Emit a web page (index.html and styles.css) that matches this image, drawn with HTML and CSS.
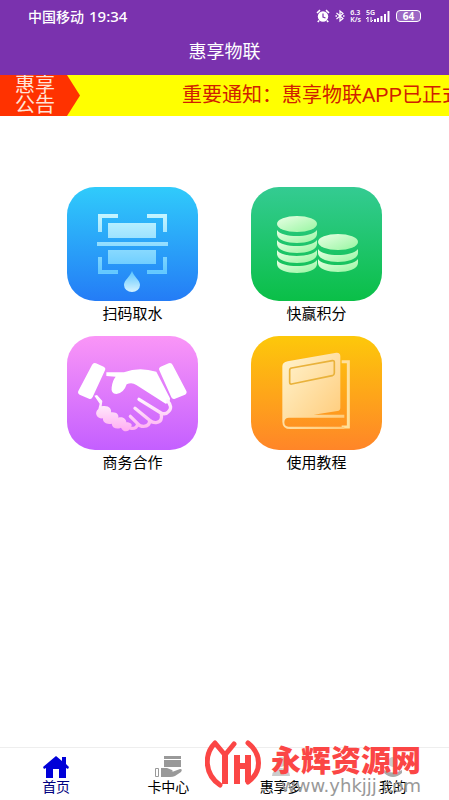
FILE: index.html
```
<!DOCTYPE html>
<html lang="zh-CN">
<head>
    <meta charset="UTF-8">
    <meta name="viewport" content="width=device-width,initial-scale=1.0" />
    <title>惠享物联</title>
    <link rel="stylesheet" href="styles.css">
</head>
<body>
<header class="header">
    <div class="status">
        <div class="status_left"><span>中国移动</span><span class="time">19:34</span></div>
        <div class="status_right">
            <svg width="14" height="14" viewBox="0 0 14 14"><circle cx="7" cy="7.5" r="5.2" fill="#fff"/><path d="M1 4L4 1.2M13 4L10 1.2M3 11.500L1.800 13M11 11.500L12.200 13" stroke="#fff" stroke-width="1.600"/><path d="M7 4.500V8L9.500 9" fill="none" stroke="#7a32ae" stroke-width="1.200"/></svg>
            <svg width="10" height="14" viewBox="0 0 10 14"><path d="M1.500 4L8 9.500L5 12V2L8 4.500L1.500 10" fill="none" stroke="#fff" stroke-width="1.200"/><path d="M.5 7h1.500M8 7h1.500" stroke="#fff" stroke-width="1.500"/></svg>
            <span class="speed">6.3<br>K/s</span>
            <svg class="signal" width="25" height="14" viewBox="0 0 25 14"><text x="0" y="6" font-size="7" fill="#fff">5G</text><path d="M2 13V8M0 10l2-2M5 8v5M5 13l2-2" stroke="#fff" fill="none"/><path d="M9 13V10M12 13V9M15.500 13V7M19 13V5M22.500 13V2" stroke="#fff" stroke-width="2"/></svg>
            <span class="battery">64</span>
        </div>
    </div>
    <h1 class="title">惠享物联</h1>
</header>

<!--notice-->
<section class="notice">
    <div class="notice_tag">惠享<br>公告</div>
    <p class="notice_text">重要通知：惠享物联APP已正式上线</p>
</section>

<!--menu-->
<main class="menu">
    <a class="menu_item" href="#">
        <span class="tile tile_blue">
            <svg viewBox="0 0 131 114">
                <defs><linearGradient id="scan" gradientUnits="userSpaceOnUse" x1="0" y1="27" x2="0" y2="105"><stop offset="0" stop-color="#c5f5ff"/><stop offset=".75" stop-color="#62c8ff"/><stop offset="1" stop-color="#d5f3ff"/></linearGradient></defs>
                <g fill="url(#scan)">
                    <path d="M31 27h20v4H35v14h-4zM80 27h20v18h-4V31H80zM31 70h4v13h16v4H31zM96 70h4v17H80v-4h16z"/>
                    <path d="M41 36h48v15H41zM30 55h71v4H30zM41 63h48v14H41z"/>
                    <path d="M65 84C63 90 57 93 57 98a8 7 0 0 0 16 0C73 93 67 90 65 84z"/>
                </g>
            </svg>
        </span>
        <span class="menu_name">扫码取水</span>
    </a>
    <a class="menu_item" href="#">
        <span class="tile tile_green">
            <svg viewBox="0 0 131 114">
                <defs><linearGradient id="coin" x1="0" y1="0" x2="1" y2="1"><stop offset="0" stop-color="#e9ffe5"/><stop offset="1" stop-color="#96f5a0"/></linearGradient></defs>
                <g fill="url(#coin)">
                    <ellipse cx="46" cy="37" rx="20" ry="8"/>
                    <path d="M26 43c5 8 34 8 40 0v4c0 12-40 12-40 0z"/>
                    <path d="M26 53c5 8 34 8 40 0v4c0 12-40 12-40 0z"/>
                    <path d="M26 63c5 8 34 8 40 0v4c0 12-40 12-40 0z"/>
                    <path d="M26 73c5 8 34 8 40 0v4c0 12-40 12-40 0z"/>
                    <ellipse cx="87" cy="55" rx="20" ry="8"/>
                    <path d="M67 62c5 8 34 8 40 0v4c0 12-40 12-40 0z"/>
                    <path d="M67 72c5 8 34 8 40 0v4c0 12-40 12-40 0z"/>
                </g>
            </svg>
        </span>
        <span class="menu_name">快赢积分</span>
    </a>
    <a class="menu_item" href="#">
        <span class="tile tile_pink">
            <svg viewBox="24 21 393 342">
                <defs><linearGradient id="hand" gradientUnits="userSpaceOnUse" x1="0" y1="200" x2="0" y2="305"><stop offset="0" stop-color="#fff"/><stop offset="1" stop-color="#ffaef2"/></linearGradient></defs>
                <path d="M111 103l23 10q7 4 4 11l-37 80q-4 8-11 5l-28-12q-7-4-4-11l41-78q4-8 12-5zM329 103l-24 10q-7 4-4 11l36 81q4 7 11 4l30-12q7-4 4-11l-41-78q-4-8-12-5z" fill="#fff"/>
                <path d="M142 130H195Q240 112 292 128L333 208Q334 222 320 224L232 168Q218 158 203 166Q195 192 172 195Q155 194 158 175Q160 155 170 143L142 141z" fill="#fff"/>
                <path d="M325 215q18 20 3 33q-8 10-22 4L240 211M306 252q6 25-12 28q-10 3-22-6L228 238M272 274q0 18-18 18q-12 0-18-8L214 262M236 286q-4 14-20 12" fill="none" stroke="url(#hand)" stroke-width="10" stroke-linecap="round" stroke-linejoin="round"/>
                <path d="M106 200l8-2 16 18-2 16c22-4 30 8 28 18c18-2 24 8 22 16c16-4 24 6 24 14c14 0 20 8 14 14c-6 18-24 16-30 2c-12 6-26 2-28-12c-14 4-28-4-26-16c-18 2-28-16-14-28l4-16z" fill="url(#hand)"/>
            </svg>
        </span>
        <span class="menu_name">商务合作</span>
    </a>
    <a class="menu_item" href="#">
        <span class="tile tile_orange">
            <svg viewBox="24 21 393 342">
                <defs><linearGradient id="book" x1="0" y1="0" x2="1" y2="1"><stop offset="0" stop-color="#fff4cf"/><stop offset="1" stop-color="#ffc873"/></linearGradient></defs>
                <path d="M296 98H316V294H296" fill="none" stroke="#ffe09a" stroke-width="9"/>
                <path d="M134 97L280 71q12-1 12 11V236q0 8-9 10L212 257H304V266H138q-14 0-14 14t14 13H304V300H142q-24 0-24-22V112q0-12 16-15z" fill="url(#book)"/>
                <path d="M146 117l122-22q6-1 6 5v32q0 6-6 8l-122 25q-6 1-6-5v-36q0-6 6-7z" fill="none" stroke="#e9b23b" stroke-width="5"/>
            </svg>
        </span>
        <span class="menu_name">使用教程</span>
    </a>
</main>

<!--tab bar-->
<footer class="footer">
    <nav class="tabs">
        <a class="tab on" href="#">
            <svg width="26" height="22" viewBox="0 0 26 22"><path d="M13 0l6 5V1h4v7l3 3-1 2-2-1v10h-7v-9h-6v9H3V12l-2 1-1-2z"/></svg>
            <span>首页</span>
        </a>
        <a class="tab" href="#">
            <svg width="28" height="22" viewBox="0 0 28 22"><path d="M10 0h17v3H10zM10 4h17v7H10zM7 12h6l5 2q2 2-1 2h-4 5l8-3q3 0 1 3l-6 4q-2 1-5 1H7z" fill="#999"/><path d="M1.500 12.500h3v8h-3z" fill="none" stroke="#999"/></svg>
            <span>卡中心</span>
        </a>
        <a class="tab" href="#">
            <svg width="24" height="22" viewBox="0 0 24 22"><circle cx="12" cy="6" r="5" fill="#ccc"/><path d="M3 20q1-8 9-8t9 8z" fill="#ccc"/></svg>
            <span>惠享多</span>
        </a>
        <a class="tab" href="#">
            <svg width="24" height="22" viewBox="0 0 24 22"><circle cx="12" cy="6" r="5" fill="#ccc"/><path d="M3 14q9 5 18 0v3q-9 8-18 0z" fill="#aaa"/></svg>
            <span>我的</span>
        </a>
    </nav>
    <div class="brand">
        <svg width="56" height="48" viewBox="0 0 56 48" fill="none" stroke="#fb4645" stroke-width="5" stroke-linecap="round" stroke-linejoin="round"><path d="M15 45C-1 34-1 14 10 3L20 15 29 4"/><path d="M43 3C57 14 57 32 43 42"/><path d="M20 15V44M32 15V44M32 26H43M43 15V42" stroke-width="6" stroke-linecap="butt"/></svg>
        <div class="brand_text">
            <strong>永辉资源网</strong>
            <span>www.yhkjjj.com</span>
        </div>
    </div>
</footer>
</body>
</html>
```
FILE: styles.css
```
/*Initialization style*/
*{box-sizing:border-box;}
html,body,h1,p{margin:0;padding:0;}
body{display:flex;flex-direction:column;min-height:100vh;color:#000;background:#fff;font-family:"Noto Sans","Noto Sans CJK SC",sans-serif;font-size:14px;}
a{color:inherit;text-decoration:none;}
svg{display:block;}

/*header*/
.header{background:#7a32ae;color:#fff;}
.status{display:flex;justify-content:space-between;align-items:center;height:32px;padding:0 28px;}
.status_left,.status_right{display:flex;align-items:center;gap:5px;}
.status_left{font-weight:500;}
.time{font-size:15px;}
.speed{font-size:7px;line-height:7px;font-weight:600;}
.signal{font-weight:600;}
.battery{width:25px;height:12px;border:1px solid #fff;border-radius:4px;background:#9b67c4;font-size:10px;line-height:10px;font-weight:700;text-align:center;}
.title{height:43px;font-size:18px;line-height:38px;font-weight:400;text-align:center;}

/*notice*/
.notice{display:flex;height:41px;background:#ff0;overflow:hidden;}
.notice_tag{flex:none;width:80px;padding-left:15px;background:#ff3200;color:#ffe4d8;font-size:20px;line-height:20px;clip-path:polygon(0 0,67px 0,100% 50%,67px 100%,0 100%);}
.notice_text{flex:none;margin-left:102px;color:#d02000;font-family:"Liberation Sans","Noto Sans CJK SC",sans-serif;font-size:20px;line-height:40px;white-space:nowrap;}

/*menu*/
.menu{display:grid;grid-template-columns:1fr 1fr;row-gap:11px;padding:71px 9% 24px;}
.menu_item{display:flex;flex-direction:column;align-items:center;}
.tile{width:131px;border-radius:28px;overflow:hidden;}
.tile_blue{background:linear-gradient(#30cbfb,#247cf6);}
.tile_green{background:linear-gradient(#34cb92,#0abf47);}
.tile_pink{background:linear-gradient(#fa96f7,#c45fff);}
.tile_orange{background:linear-gradient(#fdc80a,#ff8528);}
.menu_name{font-size:15px;line-height:24px;}

/*tab bar*/
.footer{position:relative;margin-top:auto;border-top:1px solid #eee;}
.tabs{display:flex;padding:8px 0 4px;}
.tab{flex:1;display:flex;flex-direction:column;align-items:center;line-height:18px;}
.on{color:#000080;fill:#0000d8;}

/*brand mark over the tab bar*/
.brand{position:absolute;right:28px;bottom:0;display:flex;align-items:flex-start;gap:10px;height:60px;pointer-events:none;}
.brand_text{display:flex;flex-direction:column;width:150px;color:#fb4645;}
.brand_text strong{font-size:30px;line-height:40px;font-weight:900;white-space:nowrap;}
.brand_text span{color:#999;font-family:"DejaVu Sans",sans-serif;font-size:18px;line-height:12px;text-align:right;}
```
